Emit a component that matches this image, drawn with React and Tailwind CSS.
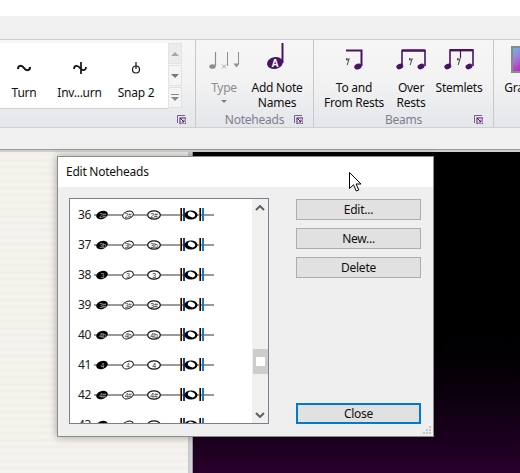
import React from 'react';

const noteColor = '#4a1465';

// Small launcher box in the corner of a ribbon group
function Launcher({ className }) {
  return (
    <svg className={className} width="9" height="9" viewBox="0 0 9 9">
      <path d="M0.5 8V0.5H8" fill="none" stroke="#7a5c94" />
      <rect x="3" y="3" width="6" height="6" fill="#fff" stroke={noteColor} strokeWidth="1" />
      <path d="M3 3L7 7M7 4.5V7H4.5" fill="none" stroke={noteColor} />
    </svg>
  );
}

function RibbonButton({ icon, lines, width, disabled, caret }) {
  return (
    <div className={`flex flex-col items-center shrink-0 ${width}`}>
      <div className="h-[40px] pb-[10px] flex items-end justify-center">{icon}</div>
      <div className={`leading-[15px] text-center whitespace-nowrap ${disabled ? 'text-[#8b8b8b]' : 'text-[#101010]'}`}>
        {lines.map((line, i) => (
          <React.Fragment key={line}>
            {i > 0 && <br />}
            {line}
          </React.Fragment>
        ))}
      </div>
      {caret && <div className="mt-[5px] w-0 h-0 border-x-[3px] border-x-transparent border-t-[3px] border-t-[#808080]" />}
    </div>
  );
}

function GroupLabel({ children }) {
  return <div className="h-[20px] leading-[20px] text-center text-[#7d7d8c]">{children}</div>;
}

function ScrollBtn({ children, bg }) {
  return (
    <div className={`h-[21px] w-[14px] flex flex-col items-center justify-center gap-[2px] border border-[#e2e2e2] ${bg}`}>
      {children}
    </div>
  );
}

function GalleryItem({ label, width, children }) {
  return (
    <div className={`flex flex-col items-center shrink-0 ${width}`}>
      <div className="h-[20px] flex items-center justify-center">{children}</div>
      <div className="mt-[7px] h-[16px] leading-[16px] text-[#101010] whitespace-nowrap">{label}</div>
    </div>
  );
}

function TypeIcon() {
  return (
    <svg width="32" height="18" viewBox="0 0 32 18">
      <g stroke="#8e8e8e" fill="#8e8e8e">
        <path d="M7.5 0V14" strokeWidth="1.2" />
        <ellipse cx="4.5" cy="14.5" rx="3.2" ry="2.3" stroke="none" />
        <path d="M19.5 0V14" strokeWidth="1" />
        <path d="M14 12.5L18 16.5M18 12.5L14 16.5" strokeWidth="0.8" />
        <path d="M30.5 0V12" strokeWidth="1" />
        <path d="M25.5 11.5H31.5L28.5 15.5Z" stroke="none" />
      </g>
    </svg>
  );
}

function AddNoteIcon() {
  return (
    <svg className="mr-[3px]" width="17" height="27" viewBox="0 0 17 27">
      <path d="M15.5 0V20" stroke={noteColor} strokeWidth="2" />
      <ellipse cx="8" cy="20" rx="8" ry="6" fill={noteColor} transform="rotate(-12 8 20)" />
      <text x="8" y="24" textAnchor="middle" fontSize="10" fontWeight="700" fill="#fff" fontFamily="Liberation Sans, sans-serif">A</text>
    </svg>
  );
}

function RestMark({ x }) {
  return (
    <g transform={`translate(${x} 9)`}>
      <path d="M3 0.5C2.5 2 1 2.5 0 1.5M3.2 0.5L1.2 7" fill="none" stroke="#444" strokeWidth="1" />
      <circle cx="0.8" cy="1" r="0.9" fill="#444" />
    </g>
  );
}

function ToAndFromIcon() {
  return (
    <svg width="18" height="21" viewBox="0 0 18 21">
      <path d="M1 1.5H16.5V17" fill="none" stroke={noteColor} strokeWidth="2" />
      <ellipse cx="13" cy="17.5" rx="3.8" ry="2.8" fill={noteColor} transform="rotate(-18 13 17.5)" />
      <RestMark x="1" />
    </svg>
  );
}

function OverRestsIcon() {
  return (
    <svg width="30" height="21" viewBox="0 0 30 21">
      <path d="M6 17V1.5H29V17" fill="none" stroke={noteColor} strokeWidth="1.6" />
      <path d="M6 1.5H29" stroke={noteColor} strokeWidth="2.4" />
      <ellipse cx="3.8" cy="17.5" rx="3.6" ry="2.7" fill={noteColor} transform="rotate(-18 3.8 17.5)" />
      <ellipse cx="25" cy="17.5" rx="3.6" ry="2.7" fill={noteColor} transform="rotate(-18 25 17.5)" />
      <RestMark x="13" />
    </svg>
  );
}

function StemletsIcon() {
  return (
    <svg width="30" height="21" viewBox="0 0 30 21">
      <path d="M6 17V1H29V17" fill="none" stroke={noteColor} strokeWidth="1.6" />
      <path d="M6 1.2H29" stroke={noteColor} strokeWidth="2.4" />
      <path d="M16.5 1V9" stroke={noteColor} strokeWidth="1.2" />
      <ellipse cx="3.8" cy="17.5" rx="3.6" ry="2.7" fill={noteColor} transform="rotate(-18 3.8 17.5)" />
      <ellipse cx="25" cy="17.5" rx="3.6" ry="2.7" fill={noteColor} transform="rotate(-18 25 17.5)" />
      <RestMark x="13" />
    </svg>
  );
}

function GraphicsIcon() {
  return (
    <div className="w-[34px] h-[27px] -mb-[3px] border-2 border-[#8a8a8a] bg-linear-to-br from-[#5db5e8] via-[#b53fc4] to-[#7a1f9a] shrink-0" />
  );
}

function NoteRow({ num, label }) {
  return (
    <div className="flex items-center h-[30px] pl-[8px] shrink-0">
      <div className="w-[16px] text-[#202020]">{num}</div>
      <svg width="120" height="30" viewBox="0 0 120 30">
        <rect x="0" y="14" width="120" height="2" fill="#999" />
        <ellipse cx="8" cy="15" rx="6" ry="4" fill="#000" transform="rotate(-20 8 15)" />
        <text x="8.5" y="17.5" textAnchor="middle" fontSize="6.5" fill="#bbb" fontFamily="Liberation Sans, sans-serif">{label}</text>
        <ellipse cx="34" cy="15" rx="5.5" ry="3.6" fill="#fff" stroke="#111" strokeWidth="1" transform="rotate(-20 34 15)" />
        <text x="34" y="17.5" textAnchor="middle" fontSize="6.5" fill="#333" fontFamily="Liberation Sans, sans-serif">{label}</text>
        <ellipse cx="60" cy="15" rx="6.3" ry="4.2" fill="#fff" stroke="#111" strokeWidth="1.2" />
        <text x="60" y="17.5" textAnchor="middle" fontSize="7" fill="#222" fontFamily="Liberation Sans, sans-serif">{label}</text>
        <rect x="86" y="8" width="1" height="13" fill="#b4490f" />
        <rect x="87" y="8" width="1" height="13" fill="#000" />
        <rect x="89" y="8" width="2" height="13" fill="#0a3f8f" />
        <ellipse cx="97" cy="15" rx="6.5" ry="4.5" fill="#000" />
        <ellipse cx="97.5" cy="14.5" rx="3.8" ry="2.6" fill="#fff" transform="rotate(25 97.5 14.5)" />
        <rect x="105" y="8" width="1" height="13" fill="#b4490f" />
        <rect x="106" y="8" width="1" height="13" fill="#000" />
        <rect x="108" y="8" width="2" height="13" fill="#1877c9" />
      </svg>
    </div>
  );
}

const rows = [
  [36, '2#'],
  [37, '3b'],
  [38, '3'],
  [39, '3#'],
  [40, '4b'],
  [41, '4'],
  [42, '4#'],
  [43, '5b'],
];

function DialogButton({ children, primary }) {
  return (
    <div
      className={`w-[125px] h-[21px] flex items-center justify-center bg-[#e1e1e1] text-[#101010] ${
        primary ? 'border-2 border-[#0078d7]' : 'border border-[#adadad]'
      }`}
    >
      {children}
    </div>
  );
}

function EditNoteheads() {
  return (
    <div className="absolute left-[57px] top-[156px] w-[377px] h-[281px] flex flex-col border border-[#8c8c8c] bg-[#efefef] shadow-[0_0_8px_rgba(0,0,0,0.35)]">
      <div className="h-[30px] bg-white pl-[8px] flex items-center text-[#101010] shrink-0">Edit Noteheads</div>
      <div className="flex-1 flex min-h-0 pl-[11px] pb-[12px]">
        <div className="mt-[11px] w-[200px] flex border border-[#7a7f8e] bg-white overflow-hidden">
          <div className="flex-1 flex flex-col pt-px overflow-hidden">
            {rows.map(([num, label]) => (
              <NoteRow key={num} num={num} label={label} />
            ))}
          </div>
          <div className="w-[16px] bg-[#f0f0f0] flex flex-col items-center shrink-0">
            <svg className="mt-[6px]" width="10" height="6" viewBox="0 0 10 6">
              <path d="M1 5L5 1L9 5" fill="none" stroke="#606060" strokeWidth="2" />
            </svg>
            <div className="mt-[138px] w-[15px] h-[25px] bg-[#cdcdcd] flex items-center justify-center">
              <div className="w-[9px] h-[9px] bg-white" />
            </div>
            <svg className="mt-[38px]" width="10" height="6" viewBox="0 0 10 6">
              <path d="M1 1L5 5L9 1" fill="none" stroke="#606060" strokeWidth="2" />
            </svg>
          </div>
        </div>
        <div className="ml-[27px] mt-[12px] flex flex-col gap-[8px]">
          <DialogButton>Edit...</DialogButton>
          <DialogButton>New...</DialogButton>
          <DialogButton>Delete</DialogButton>
          <div className="mt-auto">
            <DialogButton primary>Close</DialogButton>
          </div>
        </div>
      </div>
      <svg className="absolute right-[1px] bottom-[1px]" width="9" height="9" viewBox="0 0 9 9" fill="#c4c4c4">
        <rect x="6" y="0" width="2" height="2" />
        <rect x="3" y="3" width="2" height="2" />
        <rect x="6" y="3" width="2" height="2" />
        <rect x="0" y="6" width="2" height="2" />
        <rect x="3" y="6" width="2" height="2" />
        <rect x="6" y="6" width="2" height="2" />
      </svg>
    </div>
  );
}

export default function App() {
  return (
    <div className="relative w-[520px] h-[473px] overflow-hidden flex flex-col bg-white text-[12px] tracking-[-0.25px] font-['Noto_Sans','Open_Sans',sans-serif]">
      <div className="h-[16px] bg-white shrink-0" />
      {/* Ribbon */}
      <div className="h-[23px] bg-[#f0f0f0] shrink-0" />
      <div className="h-[89px] flex border-y border-[#cfcfcf] bg-linear-to-b from-[#f6f6f6] via-[#f2f2f3] to-[#e4e6ea] shrink-0">
        <div className="w-[196px] flex flex-col border-r border-[#c8c8c8] shrink-0">
          <div className="flex mt-[3px] h-[66px]">
            <div className="w-[168px] bg-white border-b border-[#d0d0d0] flex pt-[15px]">
              <GalleryItem label="Turn" width="w-[48px]">
                <svg width="14" height="8" viewBox="0 0 14 8">
                  <path d="M1 5C1 1 5 1 7 4C9 7 13 7 13 3" fill="none" stroke="#111" strokeWidth="2" />
                </svg>
              </GalleryItem>
              <GalleryItem label="Inv...urn" width="w-[63px]">
                <svg width="14" height="12" viewBox="0 0 14 12">
                  <path d="M1 7C1 3 5 3 7 6C9 9 13 9 13 5M8 0V12" fill="none" stroke="#111" strokeWidth="1.7" />
                </svg>
              </GalleryItem>
              <GalleryItem label="Snap 2" width="w-[50px]">
                <svg width="10" height="12" viewBox="0 0 10 12">
                  <circle cx="5" cy="7.5" r="3.5" fill="none" stroke="#111" strokeWidth="1.2" />
                  <path d="M5 0V7" stroke="#111" strokeWidth="1.2" />
                </svg>
              </GalleryItem>
            </div>
            <div className="flex flex-col gap-px">
              <ScrollBtn bg="bg-[#ececec]">
                <div className="w-0 h-0 border-x-[4px] border-x-transparent border-b-[4px] border-b-[#a8a8a8]" />
              </ScrollBtn>
              <ScrollBtn bg="bg-[#f4f4f4]">
                <div className="w-0 h-0 border-x-[4px] border-x-transparent border-t-[4px] border-t-[#777]" />
              </ScrollBtn>
              <ScrollBtn bg="bg-[#f4f4f4]">
                <div className="w-[8px] h-px bg-[#888]" />
                <div className="w-0 h-0 border-x-[4px] border-x-transparent border-t-[4px] border-t-[#888]" />
              </ScrollBtn>
            </div>
          </div>
          <div className="relative flex-1">
            <Launcher className="absolute right-[9px] top-[6px]" />
          </div>
        </div>

        <div className="w-[118px] flex flex-col border-r border-[#c8c8c8] shrink-0">
          <div className="flex-1 flex pl-[9px] gap-[2px]">
            <RibbonButton icon={<TypeIcon />} lines={['Type']} width="w-[38px]" disabled caret />
            <RibbonButton icon={<AddNoteIcon />} lines={['Add Note', 'Names']} width="w-[64px]" />
          </div>
          <div className="relative">
            <GroupLabel>Noteheads</GroupLabel>
            <Launcher className="absolute right-[10px] top-[5px]" />
          </div>
        </div>

        <div className="w-[180px] flex flex-col border-r border-[#c8c8c8] shrink-0">
          <div className="flex-1 flex pl-[8px]">
            <RibbonButton icon={<ToAndFromIcon />} lines={['To and', 'From Rests']} width="w-[64px]" />
            <div className="w-[5px]" />
            <RibbonButton icon={<OverRestsIcon />} lines={['Over', 'Rests']} width="w-[40px]" />
            <div className="w-[6px]" />
            <RibbonButton icon={<StemletsIcon />} lines={['Stemlets']} width="w-[44px]" />
          </div>
          <div className="relative">
            <GroupLabel>Beams</GroupLabel>
            <Launcher className="absolute right-[10px] top-[5px]" />
          </div>
        </div>

        <div className="flex pl-[2px]">
          <RibbonButton icon={<GraphicsIcon />} lines={['Graphics']} width="w-[64px]" />
        </div>
      </div>
      <div className="h-[21px] bg-[#f0f0f0] shrink-0" />
      <div className="h-[3px] bg-[#cfcfcf] border-t border-[#999] shrink-0" />

      {/* Document area */}
      <div className="flex-1 flex">
        <div className="w-[188px] bg-[#f4f1ec] bg-[repeating-linear-gradient(0deg,#f5f3ee_0px,#f5f3ee_3px,#f1eee8_4px,#f4f1ec_7px)] shrink-0" />
        <div className="w-[5px] bg-linear-to-r from-[#c6c8ce] to-[#d4d6dc] border-r border-[#9a9a9a] shrink-0" />
        <div className="flex-1 bg-linear-to-b from-black from-45% to-[#28002c]" />
      </div>

      <EditNoteheads />

      {/* Mouse pointer */}
      <svg className="absolute left-[349px] top-[172px]" width="13" height="20" viewBox="0 0 13 20">
        <path d="M0.5 0.5V16.5L4.5 12.8L7.3 19L9.8 18L7.1 12H12Z" fill="#fff" stroke="#000" strokeWidth="1" />
      </svg>
    </div>
  );
}
